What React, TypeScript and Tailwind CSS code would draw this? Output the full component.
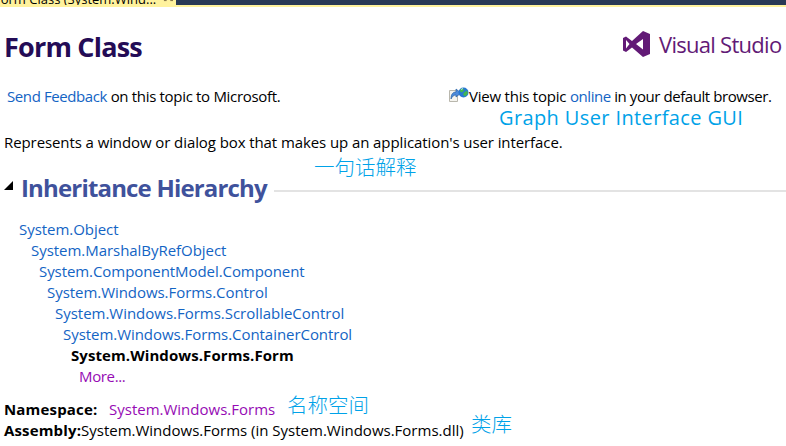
import React from "react";

const hierarchy = [
  { name: "System.Object", style: "ml-[19px] text-[#1364c4] tracking-[-0.04px]" },
  { name: "System.MarshalByRefObject", style: "ml-[31px] text-[#1364c4] tracking-[-0.04px]" },
  { name: "System.ComponentModel.Component", style: "ml-[39px] text-[#1364c4] tracking-[-0.07px]" },
  { name: "System.Windows.Forms.Control", style: "ml-[47px] text-[#1364c4] tracking-[-0.05px]" },
  { name: "System.Windows.Forms.ScrollableControl", style: "ml-[55px] text-[#1364c4] tracking-[-0.02px]" },
  { name: "System.Windows.Forms.ContainerControl", style: "ml-[63px] text-[#1364c4] tracking-[-0.05px]" },
  { name: "System.Windows.Forms.Form", style: "ml-[71px] font-bold text-black tracking-[0.08px]" },
  { name: "More...", style: "ml-[79px] text-[#960bb4] tracking-[-0.35px]" },
];

function TabStrip() {
  return (
    <div className="h-[7px] overflow-hidden border-b-2 border-[#fff29d] bg-[#293955]">
      <div className="flex h-[5px] w-[176px] overflow-hidden bg-[#fff29d]">
        <span className="-ml-[6px] -mt-[10px] text-[13px] leading-[18px]">Form Class (System.Wind...</span>
        <svg className="ml-[7px] h-[3px] w-[14px]" viewBox="0 0 14 3" stroke="#75633d" fill="none">
          <path d="M1 .5H4M8 .5H11" />
        </svg>
      </div>
    </div>
  );
}

function VisualStudioLogo() {
  return (
    <div className="flex h-[28px] items-center text-[#621a76]">
      <svg className="h-[28px] w-[28px]" viewBox="0 0 28 28" fill="currentColor" fillRule="evenodd">
        <path d="M20 1 27 4V24L20 27 9 17.500 3 22 0 20.500V8L3 6.500 9 11ZM20 9 13 14 20 19.500ZM3 10V18.500L6.500 14Z" />
      </svg>
      <span className="ml-[8px] text-[22px] leading-[28px] tracking-[-0.72px]">Visual Studio</span>
    </div>
  );
}

function OnlineIcon() {
  return (
    <svg className="h-[16px] w-[20px]" viewBox="0 0 20 16">
      <path d="M.5 4.500H8.500V15.500H.5Z" fill="#f5f4ef" stroke="#b9b7ad" />
      <path d="M2 13C2 8 4 6 7 6V3L12 7 7 11V9C5 9 3.500 10 2 13Z" fill="#4d8bdc" stroke="#28609f" strokeWidth=".7" />
      <circle cx="14.500" cy="6.500" r="5" fill="#2778d2" />
      <path d="M11 3.500 14 2 15 4.500 13 6.500 11 5.500ZM15 6.500 18 4.500 19 7.500 16 10.500 14 8.500Z" fill="#42b552" />
      <path d="M12 3.500 14 2.500" stroke="#bfe7f5" />
    </svg>
  );
}

export default function App() {
  return (
    <main className="relative h-[446px] w-[786px] overflow-hidden whitespace-nowrap bg-white font-['Open_Sans','Noto_Sans_CJK_SC',sans-serif] text-[15px] leading-[21px] text-black">
      <TabStrip />
      <header className="mt-[22px] flex h-[35px] justify-between pl-[4px]">
        <h1 className="text-[27px] font-bold leading-[36px] tracking-[-0.8px] text-[#240c56]">Form Class</h1>
        <div className="w-[163px] pt-[1px]"><VisualStudioLogo /></div>
      </header>
      <div className="mt-[22px] flex h-[21px]">
        <p className="w-[442px] pl-[7px] tracking-[-0.32px]"><a className="tracking-[-0.4px] text-[#1364c4]">Send Feedback</a> on this topic to Microsoft.</p>
        <div className="flex pl-[7px]">
          <OnlineIcon />
          <p className="tracking-[-0.43px]"><span className="tracking-[-0.22px]">View this topic </span><a className="text-[#1364c4]">online</a> in your default browser.</p>
        </div>
      </div>
      <p className="mt-[25px] pl-[4px] tracking-[-0.09px]">Represents a window or dialog box that makes up an application's user interface.</p>
      <section>
        <div className="mt-[19px] flex h-[32px]">
          <svg className="ml-[4px] mt-[9px] h-[9px] w-[9px]" viewBox="0 0 9 9"><path d="M9 0V9H0Z" /></svg>
          <h2 className="ml-[8px] w-[253px] text-[24px] font-bold leading-[32px] tracking-[-0.83px] text-[#3f529c]">Inheritance Hierarchy</h2>
          <div className="mt-[18px] h-[2px] flex-1 bg-[#e3e3e3]" />
        </div>
        <div className="mt-[15px] flex flex-col">
          {hierarchy.map((item) => <div key={item.name} className={item.style}>{item.name}</div>)}
        </div>
      </section>
      <section className="mt-[12px] pl-[4px]">
        <div className="flex"><b className="w-[105px] tracking-[0.18px]">Namespace:</b><a className="text-[#960bb4]">System.Windows.Forms</a></div>
        <div className="flex"><b className="w-[77px] tracking-[0.15px]">Assembly:</b><span>System.Windows.Forms (in System.Windows.Forms.dll)</span></div>
      </section>
      <span className="absolute left-[499px] top-[107px] text-[20px] leading-[22px] tracking-[0.38px] text-[#00a2e8]">Graph User Interface GUI</span>
      <span className="absolute left-[314px] top-[152px] font-['Noto_Sans_CJK_SC',sans-serif] text-[20.500px] font-light leading-[28px] text-[#00a2e8]">一句话解释</span>
      <span className="absolute left-[287px] top-[390px] font-['Noto_Sans_CJK_SC',sans-serif] text-[20.500px] font-light leading-[28px] text-[#00a2e8]">名称空间</span>
      <span className="absolute left-[471px] top-[409px] font-['Noto_Sans_CJK_SC',sans-serif] text-[20.500px] font-light leading-[28px] text-[#00a2e8]">类库</span>
    </main>
  );
}
